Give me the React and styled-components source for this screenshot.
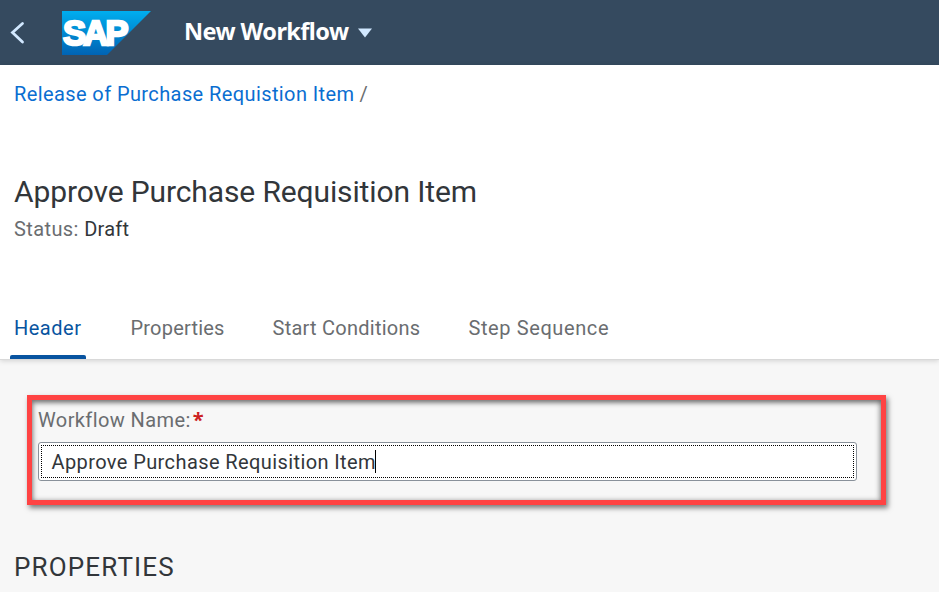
import React from "react";
import styled, { createGlobalStyle } from "styled-components";

const GlobalStyle = createGlobalStyle`
  * { box-sizing: border-box; }
  body { margin: 0; background: #f7f7f7; overflow: hidden; }
`;

const Page = styled.div`
  display: flex;
  flex-direction: column;
  width: 939px;
  height: 592px;
  overflow: hidden;
  background: #f7f7f7;
  color: #32363a;
  font-family: Roboto, "Open Sans", sans-serif;
  font-size: 20px;
`;

const Text = styled.span`
  white-space: pre;
  color: ${(p) => p.$color || "inherit"};
  letter-spacing: ${(p) => p.$spacing || 0}px;
`;

const ShellBar = styled.header`
  display: flex;
  align-items: center;
  flex: none;
  height: 65px;
  padding-left: 10px;
  background: #354a5f;
`;

const BackIcon = styled.svg`
  width: 15px;
  height: 24px;
  margin-right: 37px;
`;

const Logo = styled.svg`
  width: 89px;
  height: 44px;
  margin-right: 33px;
`;

const ShellTitle = styled.h1`
  display: flex;
  align-items: center;
  gap: 8px;
  margin: -3px 0 0;
  color: #fff;
  font-family: "Noto Sans", sans-serif;
  font-size: 23.5px;
  font-weight: 700;
  line-height: 32px;
`;

const CaretIcon = styled.svg`
  width: 16px;
  height: 10px;
  margin-top: 3px;
`;

const PageHeader = styled.section`
  display: flex;
  flex-direction: column;
  flex: none;
  height: 295px;
  padding: 15px 14px 0;
  background: #fff;
  border-bottom: 1px solid #d9d9d9;
  box-shadow: 0 1px 5px rgba(0, 0, 0, 0.15);
`;

const Breadcrumb = styled.nav`
  line-height: 28px;
`;

const Title = styled.h2`
  margin: 64px 0 0;
  font-size: 30px;
  font-weight: 400;
  line-height: 40px;
`;

const Status = styled.div`
  margin-top: 4px;
  line-height: 26px;
`;

const Tabs = styled.div`
  display: flex;
  gap: 41px;
  height: 45px;
  margin: auto 0 0 -4px;
`;

const Tab = styled.div`
  position: relative;
  width: ${(p) => p.$width}px;
  height: 45px;
  padding: 0 4px;
  line-height: 28px;
  color: ${(p) => (p.$active ? "#0854a0" : "#6a6d70")};

  &::after {
    content: "";
    position: absolute;
    left: 0;
    right: 0;
    bottom: 0;
    height: 4px;
    border-radius: 2px 2px 0 0;
    background: ${(p) => (p.$active ? "#0854a0" : "transparent")};
  }
`;

const Content = styled.main`
  display: flex;
  flex-direction: column;
  padding: 35px 0 0 27px;
`;

const Highlight = styled.div`
  width: 859px;
  height: 110px;
  padding: 6px 6px 0;
  border: 5px solid #ff4343;
  box-shadow: 2px 3px 5px rgba(0, 0, 0, 0.5), inset 1px 3px 5px rgba(0, 0, 0, 0.45), inset -2px 0 5px rgba(0, 0, 0, 0.25);
`;

const Label = styled.label`
  display: flex;
  height: 28px;
  line-height: 28px;
  color: #6a6d70;
`;

const Required = styled.span`
  margin-left: 2px;
  color: #c22;
  font-family: "Open Sans", sans-serif;
  font-weight: 700;
`;

const Field = styled.div`
  width: 819px;
  height: 39px;
  margin-top: 8px;
  padding: 2px;
  background: #fff;
  border: 1px solid #89919a;
  border-radius: 3px;
`;

const FieldFocus = styled.div`
  display: flex;
  align-items: center;
  height: 33px;
  padding-left: 9.5px;
  border: 1px dotted #000;
`;

const Cursor = styled.span`
  width: 1px;
  height: 23px;
  margin-left: -0.5px;
  background: #000;
`;

const SectionTitle = styled.h3`
  margin: 43px 0 0 -13px;
  font-size: 26px;
  font-weight: 400;
  line-height: 38px;
`;

export default function App() {
  return (
    <>
      <GlobalStyle />
      <Page>
        <ShellBar>
          <BackIcon viewBox="0 0 15 24">
            <path d="M12.5 2.5 L2.5 11.5 L12.5 21" fill="none" stroke="#d1e8ff" strokeWidth="2.8" strokeLinecap="round" />
          </BackIcon>
          <Logo viewBox="0 0 89 44">
            <defs>
              <linearGradient id="sap" x1="0" y1="0" x2="0" y2="1">
                <stop offset="0" stopColor="#00aeef" />
                <stop offset="1" stopColor="#0063b4" />
              </linearGradient>
            </defs>
            <path d="M0 0H89L45 44H0Z" fill="url(#sap)" />
            <text
              x="1"
              y="34.3"
              fill="#fff"
              stroke="#fff"
              strokeWidth="2.4"
              fontFamily="Liberation Sans, sans-serif"
              fontWeight="700"
              fontSize="34.5"
              letterSpacing="-2.7"
            >
              SAP
            </text>
          </Logo>
          <ShellTitle>
            <Text $spacing={-0.57}>New Workflow</Text>
            <CaretIcon viewBox="0 0 16 10">
              <path d="M1 0.5H15L8 9.5Z" fill="#d1e8ff" />
            </CaretIcon>
          </ShellTitle>
        </ShellBar>
        <PageHeader>
          <Breadcrumb>
            <Text $color="#0a6ed1" $spacing={0.4}>Release of Purchase Requistion Item</Text>
            <Text $color="#6a6d70"> /</Text>
          </Breadcrumb>
          <Title><Text $spacing={-0.12}>Approve Purchase Requisition Item</Text></Title>
          <Status>
            <Text $color="#6a6d70" $spacing={0.4}>Status: </Text>
            <Text $spacing={0.25}>Draft</Text>
          </Status>
          <Tabs>
            <Tab $active $width={75.5}><Text $spacing={0.5}>Header</Text></Tab>
            <Tab $width={101}><Text $spacing={0.2}>Properties</Text></Tab>
            <Tab $width={155}><Text $spacing={0.25}>Start Conditions</Text></Tab>
            <Tab $width={150}><Text $spacing={0.6}>Step Sequence</Text></Tab>
          </Tabs>
        </PageHeader>
        <Content>
          <Highlight>
            <Label><Text $spacing={0.4}>Workflow Name:</Text><Required>*</Required></Label>
            <Field>
              <FieldFocus><Text $spacing={0.4}>Approve Purchase Requisition Item</Text><Cursor /></FieldFocus>
            </Field>
          </Highlight>
          <SectionTitle><Text $spacing={1.15}>PROPERTIES</Text></SectionTitle>
        </Content>
      </Page>
    </>
  );
}
